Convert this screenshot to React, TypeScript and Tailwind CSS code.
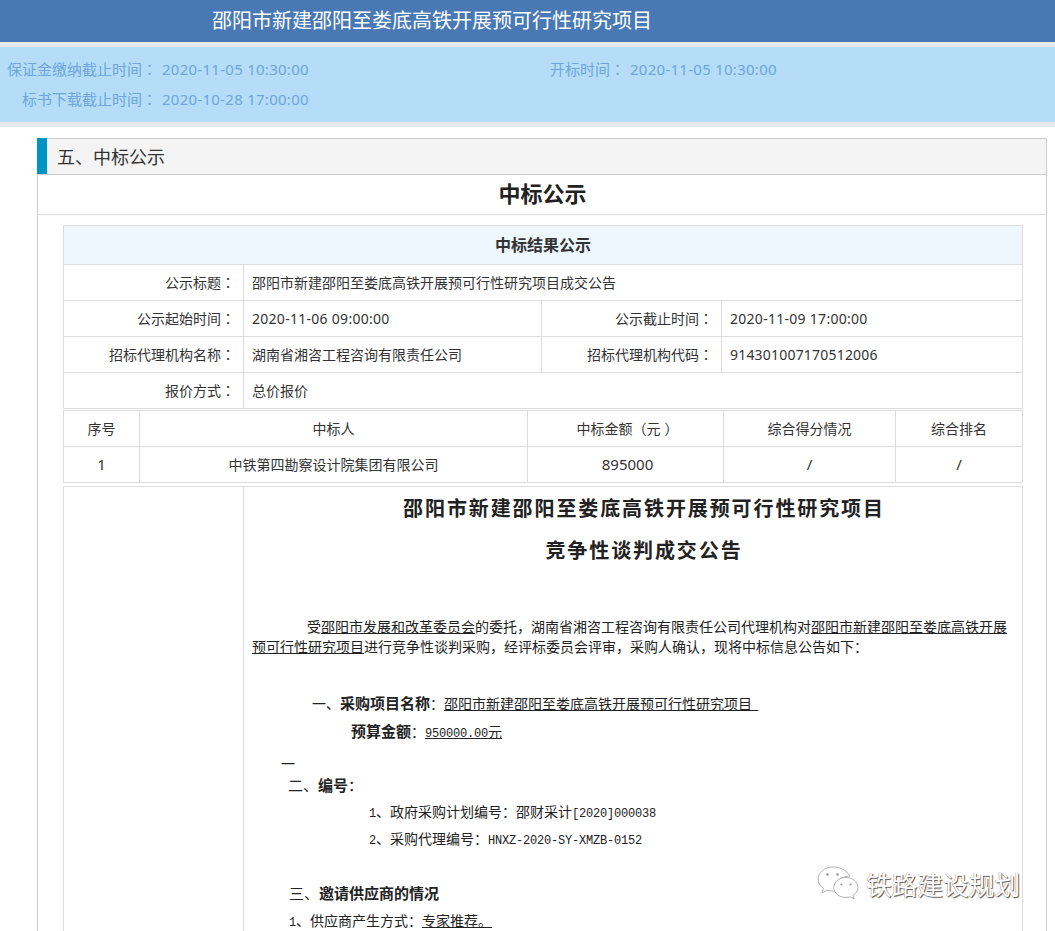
import React from 'react';

const CJK = '"Noto Sans CJK SC", sans-serif';
const UI_FONT = '"Noto Sans", "Noto Sans CJK SC", sans-serif';

function Colon() {
  return <span className="font-['Noto_Sans_CJK_TC']">：</span>;
}

function InfoItem({ label, value, labelClass }: { label: string; value: string; labelClass: string }) {
  return (
    <div className="flex items-center h-[30px]">
      <span className={`${labelClass} text-right shrink-0 whitespace-nowrap text-[15px]`}>
        {label}
        <Colon />
      </span>
      <span className="ml-[5px] text-[15px] tracking-[0.27px] whitespace-nowrap">{value}</span>
    </div>
  );
}

function Label({ children, className = '' }: { children: React.ReactNode; className?: string }) {
  return (
    <div className={`flex items-center justify-end pr-[8px] text-[14px] ${className}`}>
      <span>
        {children}
        <Colon />
      </span>
    </div>
  );
}

function Value({ children, className = '' }: { children: React.ReactNode; className?: string }) {
  return <div className={`flex items-center pl-[8px] text-[14px] ${className}`}>{children}</div>;
}

const winners: React.ReactNode[] = [
  '序号',
  '中标人',
  <>
    中标金额（元<span className="ml-[4px]">）</span>
  </>,
  '综合得分情况',
  '综合排名',
];
const winnerRow = ['1', '中铁第四勘察设计院集团有限公司', '895000', '/', '/'];

function Latin({ children }: { children: React.ReactNode }) {
  return <span className="font-['Liberation_Mono'] text-[12px] tracking-[-0.2px]">{children}</span>;
}

export default function App() {
  return (
    <div className="relative h-[931px] overflow-hidden bg-white text-[#333]" style={{ fontFamily: UI_FONT }}>
      <header className="h-[42px] bg-[#4879b5] pl-[212px] flex items-center text-white text-[20px]">
        邵阳市新建邵阳至娄底高铁开展预可行性研究项目
      </header>
      <div className="border-y-[5px] border-[#e6e9ec] bg-[#b5ddf8] h-[85px] py-[7px] text-[#6fa5d8]">
        <div className="flex">
          <div className="w-[550px]">
            <InfoItem label="保证金缴纳截止时间" labelClass="w-[157px]" value="2020-11-05 10:30:00" />
          </div>
          <InfoItem label="开标时间" labelClass="w-[75px]" value="2020-11-05 10:30:00" />
        </div>
        <InfoItem label="标书下载截止时间" labelClass="w-[157px]" value="2020-10-28 17:00:00" />
      </div>

      <main className="mt-[11px] ml-[37px] w-[1010px] border border-[#ccc] border-b-0">
        <div className="h-[36px] bg-[#f4f4f4] border-b border-[#ccc] flex items-center">
          <div className="w-[10px] h-[36px] bg-[#0095c5] -mt-px -ml-px" />
          <h2 className="ml-[10px] pt-px text-[18px] text-[#333]">五、中标公示</h2>
        </div>
        <h1 className="h-[40px] pb-[2px] pl-px border-b border-[#ddd] flex items-center justify-center text-[22px] font-bold text-[#222]">
          中标公示
        </h1>

        <section className="ml-[25px] w-[960px] mt-[10px]">
          <div className="border border-[#ddd]">
            <div className="h-[39px] bg-[#eef6fe] flex items-center justify-center font-bold text-[16px] border-b border-[#ddd]">
              中标结果公示
            </div>
            <div className="grid grid-cols-[180px_298px_180px_1fr] grid-rows-[36px_36px_36px_35px]">
              <Label className="border-r border-b border-[#ddd]">公示标题</Label>
              <Value className="col-span-3 border-b border-[#ddd]">邵阳市新建邵阳至娄底高铁开展预可行性研究项目成交公告</Value>
              <Label className="border-r border-b border-[#ddd]">公示起始时间</Label>
              <Value className="border-r border-b border-[#ddd] tracking-[0.28px]">2020-11-06 09:00:00</Value>
              <Label className="border-r border-b border-[#ddd]">公示截止时间</Label>
              <Value className="border-b border-[#ddd] tracking-[0.28px]">2020-11-09 17:00:00</Value>
              <Label className="border-r border-b border-[#ddd]">招标代理机构名称</Label>
              <Value className="border-r border-b border-[#ddd]">湖南省湘咨工程咨询有限责任公司</Value>
              <Label className="border-r border-b border-[#ddd]">招标代理机构代码</Label>
              <Value className="border-b border-[#ddd] tracking-[0.2px]">914301007170512006</Value>
              <Label className="border-r border-[#ddd]">报价方式</Label>
              <Value className="col-span-3">总价报价</Value>
            </div>
          </div>

          <div className="mt-[1px] border border-[#ddd] grid grid-cols-[76px_388px_196px_172px_1fr] grid-rows-[36px_35px] text-[14px]">
            {winners.map((h, i) => (
              <div key={i} className={`flex items-center justify-center border-b border-[#ddd] ${i < 4 ? 'border-r' : ''} ${i === 2 ? 'pl-[4px]' : ''}`}>
                {h}
              </div>
            ))}
            {winnerRow.map((v, i) => (
              <div key={i} className={`flex items-center justify-center border-[#ddd] ${i < 4 ? 'border-r' : ''} ${i === 1 ? '' : 'text-[15px]'} ${i === 2 ? 'pl-[4px]' : ''}`}>
                {v}
              </div>
            ))}
          </div>

          <div className="mt-[3px] border border-[#ddd] grid grid-cols-[180px_1fr] h-[500px]">
            <div className="border-r border-[#ddd]" />
            <article className="pl-[8px] pr-[12px] text-[14px] text-[#222]" style={{ fontFamily: CJK }}>
              <p className="mt-[7px] h-[28px] leading-[28px] pl-[26px] text-center text-[20px] font-bold tracking-[1.9px]">
                邵阳市新建邵阳至娄底高铁开展预可行性研究项目
              </p>
              <p className="mt-[14px] h-[28px] leading-[28px] pl-[26px] text-center text-[20px] font-bold tracking-[1.9px]">
                竞争性谈判成交公告
              </p>
              <p className="mt-[52px] leading-[20px] indent-[55px]">
                受<span className="underline">邵阳市发展和改革委员会</span>的委托，湖南省湘咨工程咨询有限责任公司代理机构对
                <span className="underline">邵阳市新建邵阳至娄底高铁开展预可行性研究项目</span>
                进行竞争性谈判采购，经评标委员会评审，采购人确认，现将中标信息公告如下：
              </p>
              <p className="mt-[37px] h-[20px] leading-[20px] pl-[60px]">
                一、<b className="text-[15px]">采购项目名称</b>：<span className="underline">邵阳市新建邵阳至娄底高铁开展预可行性研究项目 &nbsp; </span>
              </p>
              <p className="mt-[8px] h-[20px] leading-[20px] pl-[99px]">
                <b className="text-[15px]">预算金额</b>：<span className="underline"><Latin>950000.00</Latin>元</span>
              </p>
              <p className="mt-[12px] h-[20px] leading-[20px] pl-[29px]">一</p>
              <p className="mt-[2px] h-[20px] leading-[20px] pl-[36px] text-[15px]">
                二、<b>编号</b>：
              </p>
              <p className="mt-[6px] h-[20px] leading-[20px] pl-[117px]">
                <Latin>1</Latin>、政府采购计划编号：邵财采计<Latin>[2020]000038</Latin>
              </p>
              <p className="mt-[7px] h-[20px] leading-[20px] pl-[117px]">
                <Latin>2</Latin>、采购代理编号：<Latin>HNXZ-2020-SY-XMZB-0152</Latin>
              </p>
              <p className="mt-[35px] h-[20px] leading-[20px] pl-[37px] text-[15px]">
                三、<b>邀请供应商的情况</b>
              </p>
              <p className="mt-[7px] h-[20px] leading-[20px] pl-[37px]">
                <Latin>1</Latin>、供应商产生方式：<span className="underline">专家推荐。 </span>
              </p>
            </article>
          </div>
        </section>
      </main>

      <div className="absolute left-[817px] top-[866px] flex items-center">
        <svg width="42" height="36" viewBox="0 0 42 36" fill="#fff" stroke="#aaa" strokeWidth="0.9">
          <path d="M16 1C7.5 1 1 6.5 1 13.2c0 3.9 2.2 7 5.5 9.2l-1.6 4.6 5.3-2.8c2 .6 3.9.9 5.8.9 2 0 2.5-.2 3-.3-.4-1.2-.6-2.4-.6-3.6 0-6 5.7-10.9 13-10.9h1.3C30.600 4.800 24 1 16 1Z" />
          <path d="M41 21.500c0-5.600-5.600-10-12-10-6.800 0-12.200 4.400-12.200 10s5.400 10 12.200 10c1.400 0 2.800-.3 4.200-.7l3.900 2.100-1.100-3.500C38.900 27.700 41 24.800 41 21.500Z" />
          <circle cx="10.500" cy="8.500" r="1.300" fill="#999" stroke="none" />
          <circle cx="20.500" cy="8.500" r="1.300" fill="#999" stroke="none" />
          <circle cx="24.500" cy="18.500" r="1.100" fill="#999" stroke="none" />
          <circle cx="33.500" cy="18.500" r="1.100" fill="#999" stroke="none" />
        </svg>
        <span className="ml-[7px] text-[25.7px] leading-none text-white [text-shadow:1px_1px_1px_#555,-0.5px_-0.5px_0.5px_#999]" style={{ fontFamily: CJK }}>
          铁路建设规划
        </span>
      </div>
    </div>
  );
}
